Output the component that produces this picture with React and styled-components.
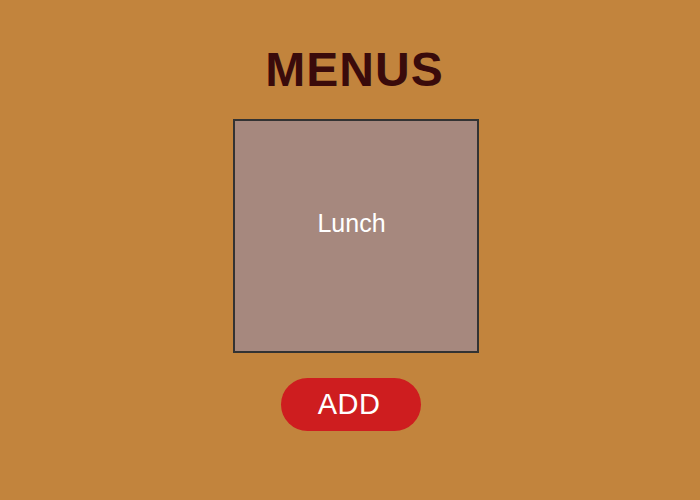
import React from 'react'
import styled, { createGlobalStyle } from 'styled-components'

const GlobalStyle = createGlobalStyle`
  html, body {
    margin: 0;
    padding: 0;
    background-color: #C2843D;
    font-family: "Liberation Sans", Arial, sans-serif;
  }
`

const Page = styled.div`
  width: 700px;
  height: 500px;
  display: flex;
  flex-direction: column;
  align-items: center;
  padding-top: 43px;
  box-sizing: border-box;
`

const Title = styled.h1`
  margin: 0 0 22px 9px;
  font-size: 48px;
  line-height: 54px;
  font-weight: bold;
  letter-spacing: 1px;
  color: #3A0B0B;
`

const MenuCard = styled.div`
  width: 246px;
  height: 234px;
  box-sizing: border-box;
  margin-left: 11px;
  border: 2px solid #333333;
  background-color: #A6887E;
  display: flex;
  align-items: center;
  justify-content: center;
  padding: 0 8px 26px 0;
  color: #FFFFFF;
  font-size: 25px;
`

const AddButton = styled.button`
  margin: 25px 0 0 2px;
  width: 140px;
  height: 53px;
  border: none;
  border-radius: 27px;
  background-color: #CE1D1F;
  color: #FFFFFF;
  font-family: "Liberation Sans", Arial, sans-serif;
  font-size: 29px;
  letter-spacing: 0.5px;
  padding: 0 4px 0 0;
  cursor: pointer;
`

const App = () => (
  <>
    <GlobalStyle />
    <Page>
      <Title>MENUS</Title>
      <MenuCard>Lunch</MenuCard>
      <AddButton>ADD</AddButton>
    </Page>
  </>
)

export default App
